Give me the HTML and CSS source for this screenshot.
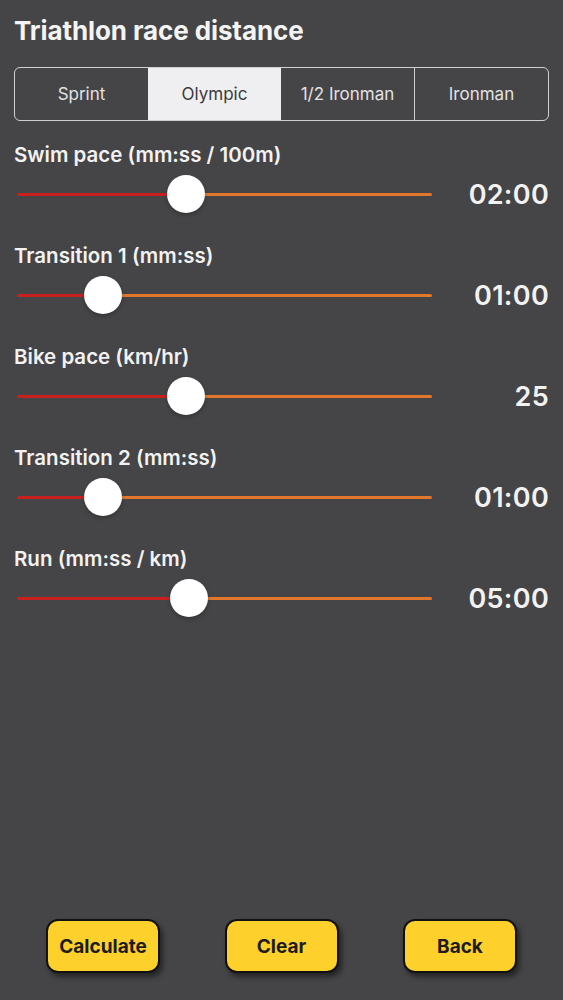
FILE: index.html
```html
<!DOCTYPE html>
<html lang="en">
<head>
<meta charset="utf-8">
<title>Triathlon race distance</title>
<link rel="stylesheet" href="styles.css">
</head>
<body>
<div class="page">
  <h1 class="title">Triathlon race distance</h1>
  <div class="segmented">
    <div class="seg">Sprint</div>
    <div class="seg selected">Olympic</div>
    <div class="seg">1/2 Ironman</div>
    <div class="seg">Ironman</div>
  </div>

  <div class="field">
    <div class="label">Swim pace (mm:ss / 100m)</div>
    <div class="slider-row">
      <div class="slider">
        <div class="track-min" style="width:40.7%"></div>
        <div class="track-max"></div>
        <div class="thumb" style="left:40.7%"></div>
      </div>
      <div class="value">02:00</div>
    </div>
  </div>

  <div class="field">
    <div class="label">Transition 1 (mm:ss)</div>
    <div class="slider-row">
      <div class="slider">
        <div class="track-min" style="width:20.7%"></div>
        <div class="track-max"></div>
        <div class="thumb" style="left:20.7%"></div>
      </div>
      <div class="value">01:00</div>
    </div>
  </div>

  <div class="field">
    <div class="label">Bike pace (km/hr)</div>
    <div class="slider-row">
      <div class="slider">
        <div class="track-min" style="width:40.7%"></div>
        <div class="track-max"></div>
        <div class="thumb" style="left:40.7%"></div>
      </div>
      <div class="value">25</div>
    </div>
  </div>

  <div class="field">
    <div class="label">Transition 2 (mm:ss)</div>
    <div class="slider-row">
      <div class="slider">
        <div class="track-min" style="width:20.7%"></div>
        <div class="track-max"></div>
        <div class="thumb" style="left:20.7%"></div>
      </div>
      <div class="value">01:00</div>
    </div>
  </div>

  <div class="field">
    <div class="label">Run (mm:ss / km)</div>
    <div class="slider-row">
      <div class="slider">
        <div class="track-min" style="width:41.4%"></div>
        <div class="track-max"></div>
        <div class="thumb" style="left:41.4%"></div>
      </div>
      <div class="value">05:00</div>
    </div>
  </div>

  <div class="buttons">
    <button class="btn">Calculate</button>
    <button class="btn">Clear</button>
    <button class="btn">Back</button>
  </div>
</div>
</body>
</html>
```

FILE: styles.css
```css
* { box-sizing: border-box; }
html, body {
  margin: 0;
  padding: 0;
  background: #454446;
}
body {
  font-family: "Inter", "Roboto", "Liberation Sans", sans-serif;
  color: #f2f2f2;
}
.page {
  height: 1000px;
  display: flex;
  flex-direction: column;
  padding: 0 14px 27px 14px;
}
.title {
  margin: 16px 0 0 0;
  font-size: 26px;
  line-height: 30px;
  font-weight: 700;
  color: #f4f4f4;
  letter-spacing: -0.1px;
}
.segmented {
  margin-top: 21px;
  height: 54px;
  display: flex;
  border: 1.5px solid #d0d0d2;
  border-radius: 6px;
  overflow: hidden;
}
.seg {
  flex: 1;
  display: flex;
  align-items: center;
  justify-content: center;
  font-size: 17px;
  color: #e2e2e4;
  border-left: 1.5px solid #cfcfd1;
}
.seg:first-child { border-left: none; }
.seg.selected {
  background: #efeff1;
  color: #3a3a3c;
  border-left: none;
}
.seg.selected + .seg { border-left: none; }
.field {
  margin-top: 22px;
}
.field + .field { margin-top: 30px; }
.label {
  font-size: 20.5px;
  line-height: 24px;
  font-weight: 600;
  color: #f2f2f2;
}
.slider-row {
  margin-top: 7px;
  height: 40px;
  display: flex;
  align-items: center;
}
.slider {
  position: relative;
  margin-left: 3px;
  width: 415px;
  height: 40px;
  display: flex;
  align-items: flex-start;
}
.track-min {
  margin-top: 19px;
  height: 3px;
  background: #c8201f;
  border-radius: 2px 0 0 2px;
}
.track-max {
  margin-top: 19px;
  flex: 1;
  height: 3px;
  background: #e2772c;
  border-radius: 0 2px 2px 0;
}
.thumb {
  position: absolute;
  top: 1px;
  width: 38px;
  height: 38px;
  margin-left: -19px;
  border-radius: 50%;
  background: #ffffff;
  box-shadow: 0 2px 4px rgba(0,0,0,0.25);
}
.value {
  flex: 1;
  text-align: right;
  font-size: 27px;
  font-weight: 600;
  color: #f2f2f2;
  letter-spacing: 0.3px;
}
.buttons {
  margin-top: auto;
  display: flex;
  justify-content: space-between;
  padding: 0 32px;
}
.btn {
  width: 114px;
  height: 54px;
  background: #fdd02b;
  border: 2.5px solid #111;
  border-radius: 12px;
  font-family: "Inter", "Roboto", "Liberation Sans", sans-serif;
  font-size: 19px;
  font-weight: 700;
  color: #1c1c1c;
  box-shadow: 3px 4px 5px rgba(0,0,0,0.45);
  padding: 0;
}
```
